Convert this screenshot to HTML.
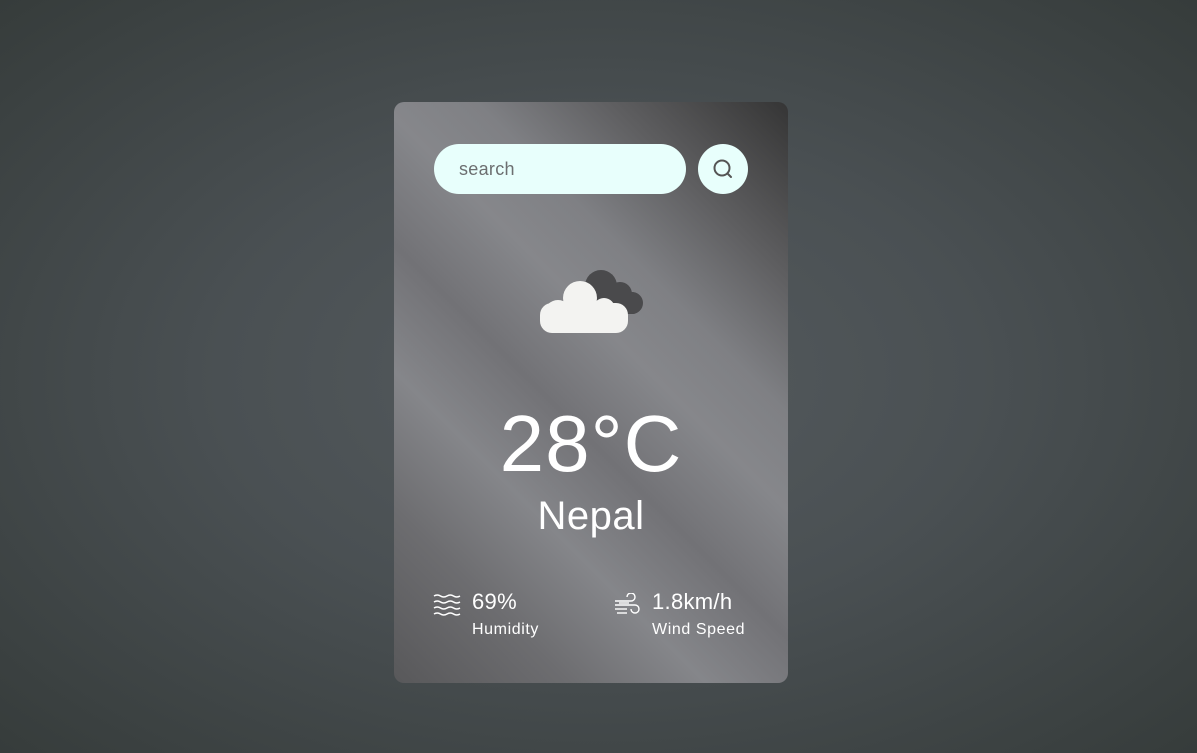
<!DOCTYPE html>
<html><head><style>
html,body{margin:0;height:100%;}
body{width:1197px;height:753px;overflow:hidden;background:radial-gradient(ellipse at 50% 50%,#555b5e 0%,#4a5053 45%,#363c3b 100%);font-family:"Liberation Sans",sans-serif;position:relative;}
.card{position:absolute;left:394px;top:102px;width:394px;height:581px;border-radius:10px;
background:linear-gradient(225deg,#353535 0%,#5e5e60 18%,#7f8084 32%,#86878b 42%,#727276 55%,#85868a 68%,#6d6d70 82%,#58585a 100%);}
.search{position:absolute;left:40px;top:42px;width:252px;height:50px;border-radius:25px;background:#e8fffc;}
.search span{position:absolute;left:25px;top:15px;font-size:18px;color:#6c6f70;letter-spacing:0.3px;}
.btn{position:absolute;left:304px;top:42px;width:50px;height:50px;border-radius:50%;background:#e8fffc;}
.temp{position:absolute;left:0;width:394px;text-align:center;color:#fff;top:296px;font-size:80px;line-height:92px;letter-spacing:1px;}
.city{position:absolute;left:0;width:394px;text-align:center;color:#fff;top:390px;font-size:40px;line-height:48px;letter-spacing:0.5px;}
.v{position:absolute;color:#fff;font-size:22px;top:487px;letter-spacing:0.3px;}
.l{position:absolute;color:#fff;font-size:16px;top:519px;letter-spacing:0.6px;}
</style></head><body>
<div class="card">
 <div class="search"><span>search</span></div>
 <div class="btn"><svg width="50" height="50" viewBox="0 0 50 50"><circle cx="24" cy="24" r="7.5" fill="none" stroke="#555" stroke-width="2"/><line x1="29.5" y1="29.5" x2="33" y2="33" stroke="#555" stroke-width="2" stroke-linecap="round"/></svg></div>
 <svg style="position:absolute;left:142px;top:160px" width="112" height="75" viewBox="0 0 112 75">
  <g fill="#4a4a4c"><circle cx="65" cy="24" r="16"/><circle cx="84" cy="32" r="12"/><circle cx="96" cy="41" r="11"/><rect x="60" y="30" width="46" height="22" rx="10"/></g>
  <g fill="#f3f3f1"><circle cx="44" cy="36" r="17"/><circle cx="68" cy="47" r="11"/><rect x="4" y="41" width="88" height="30" rx="12"/><circle cx="22" cy="52" r="14"/></g>
 </svg>
 <div class="temp">28°C</div>
 <div class="city">Nepal</div>
 <svg style="position:absolute;left:39px;top:491px" width="28" height="26" viewBox="0 0 28 26" fill="none" stroke="#fff" stroke-width="1.5">
  <path d="M1 3q3.3-2 6.5 0t6.5 0t6.5 0t6.5 0"/><path d="M1 9q3.3-2 6.5 0t6.5 0t6.5 0t6.5 0"/><path d="M1 15q3.3-2 6.5 0t6.5 0t6.5 0t6.5 0"/><path d="M1 21q3.3-2 6.5 0t6.5 0t6.5 0t6.5 0"/></svg>
 <div class="v" style="left:78px">69%</div>
 <div class="l" style="left:78px">Humidity</div>
 <svg style="position:absolute;left:219px;top:491px" width="28" height="28" viewBox="0 0 28 28" fill="none" stroke="#fff" stroke-width="1.4">
  <path d="M2 8h16a4 4 0 1 0-4-4"/><path d="M2 12h20a4 4 0 1 1-4 4"/><path d="M2 16h12"/><path d="M4 20h10"/><path d="M6 10h10"/></svg>
 <div class="v" style="left:258px">1.8km/h</div>
 <div class="l" style="left:258px">Wind Speed</div>
</div>
</body></html>
